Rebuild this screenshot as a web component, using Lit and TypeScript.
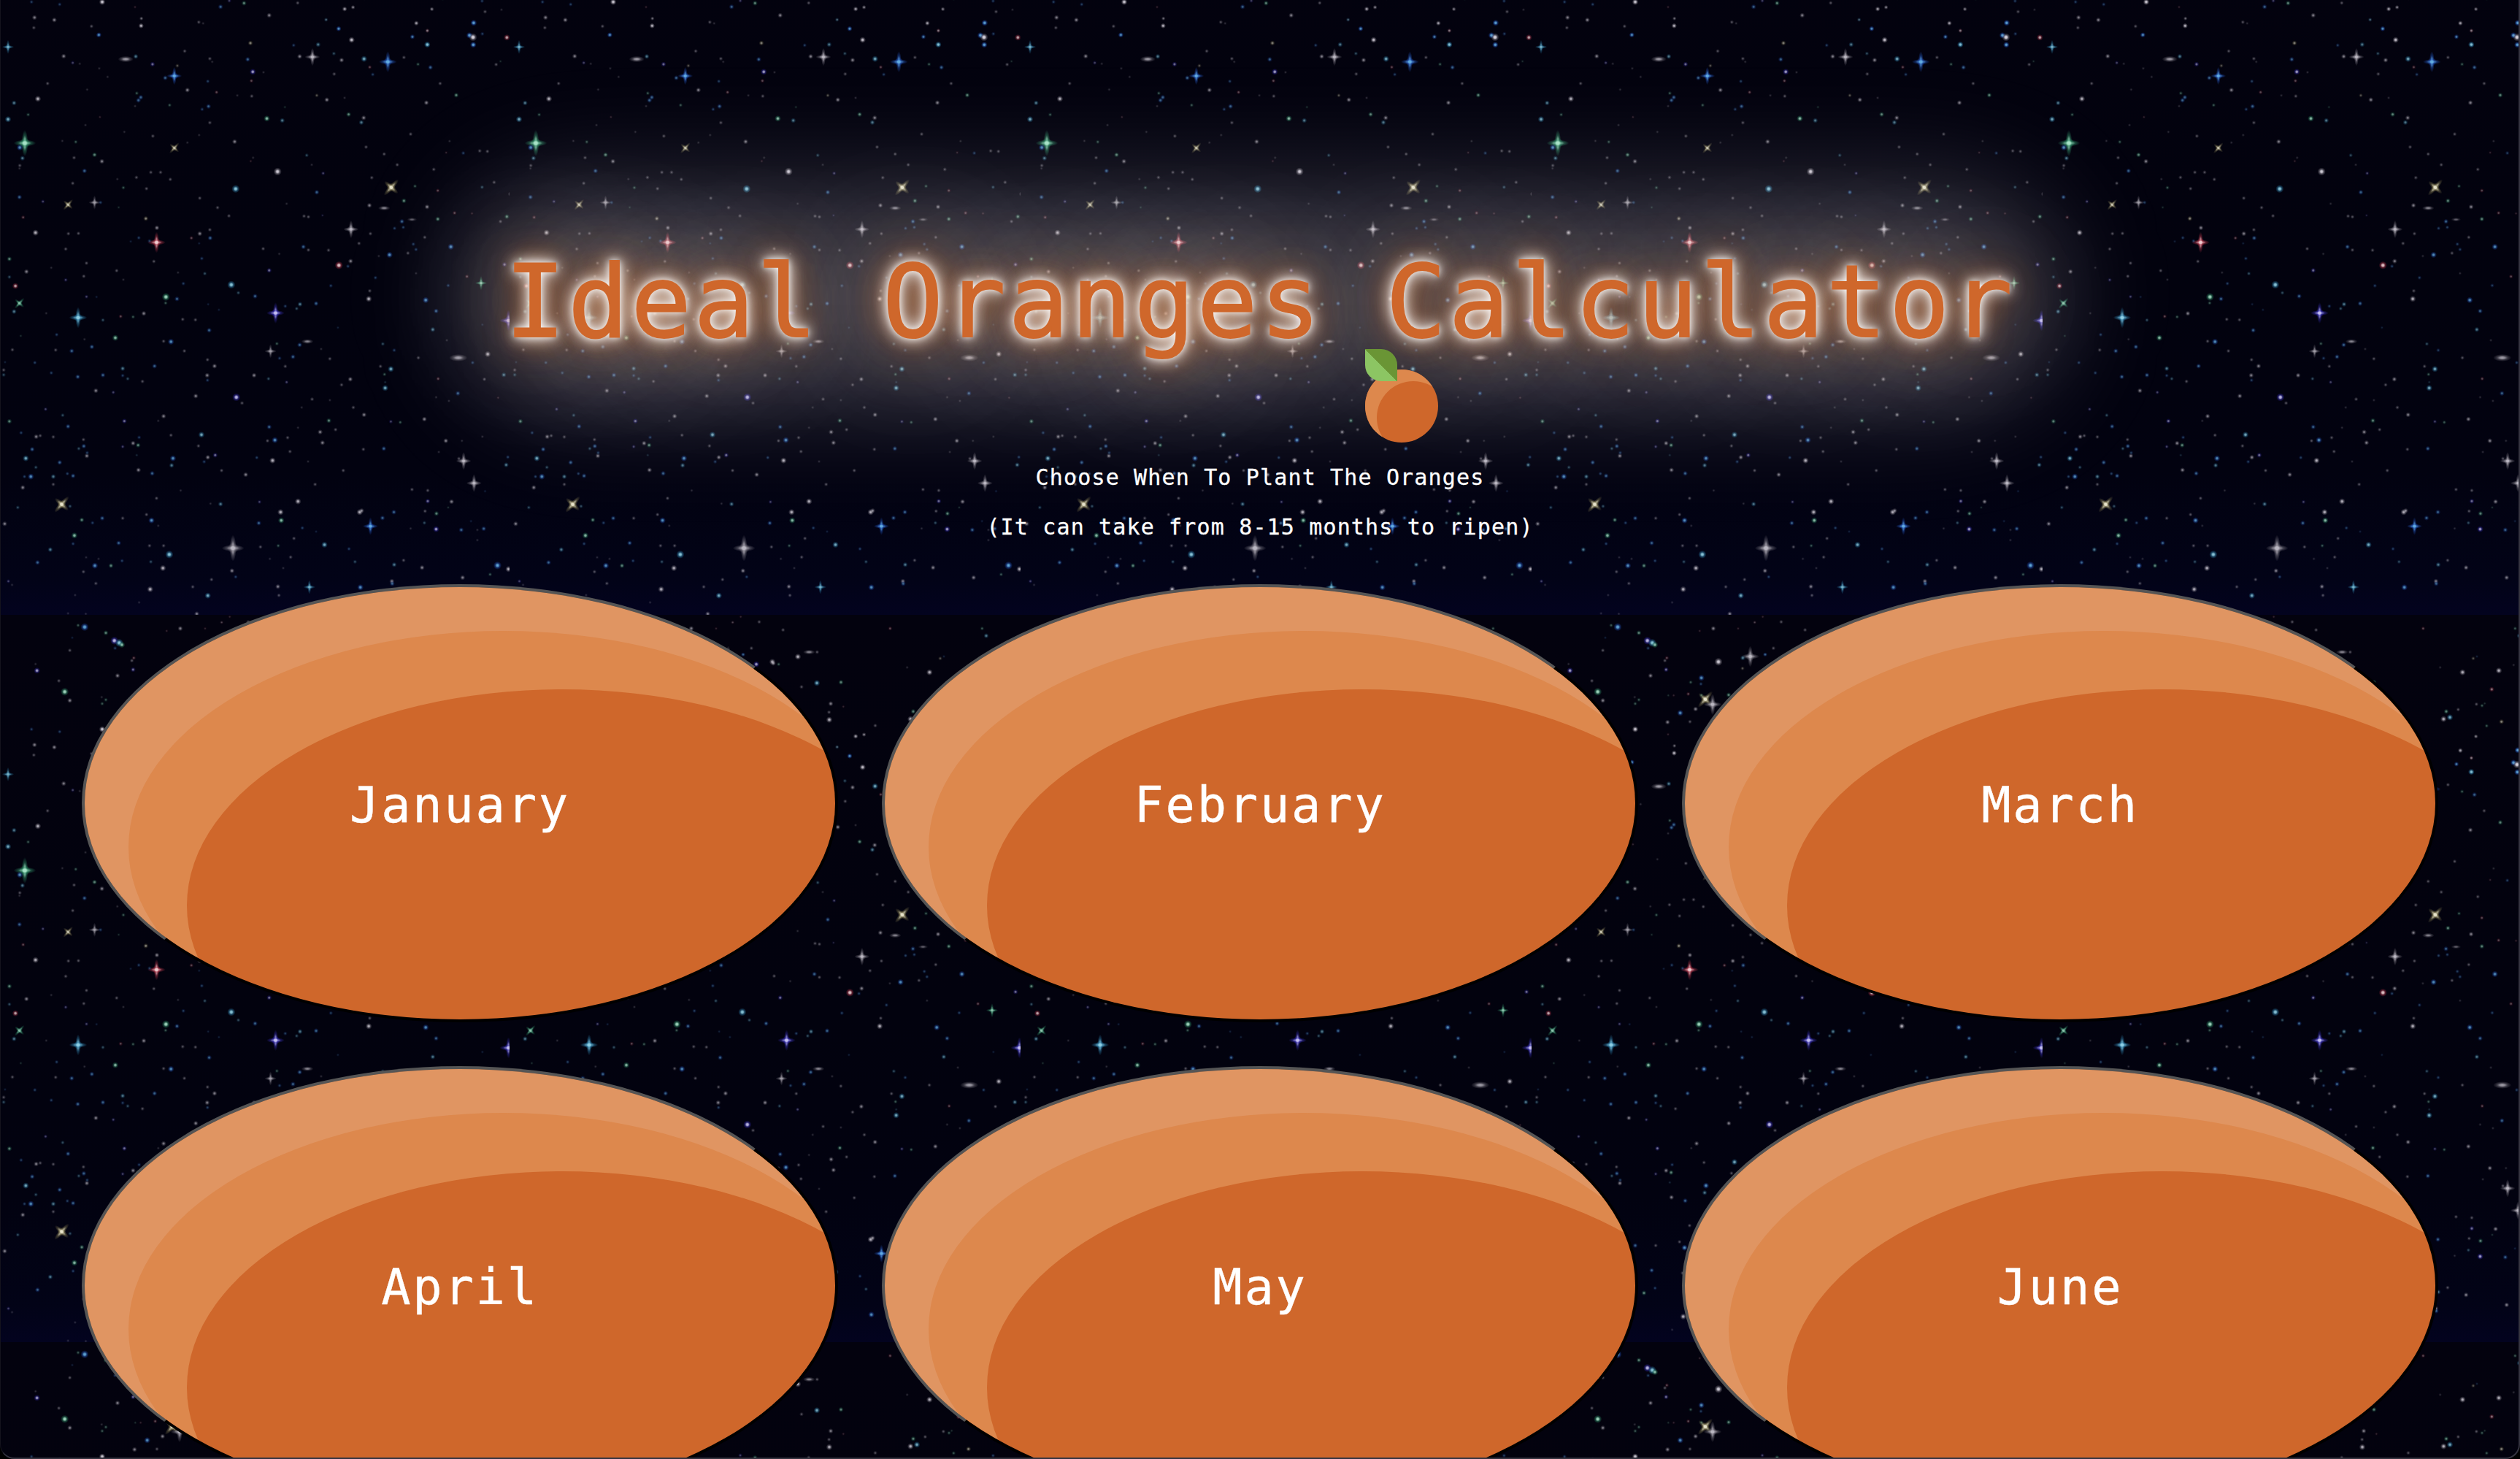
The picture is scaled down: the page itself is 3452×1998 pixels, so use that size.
import { LitElement, html, svg, css } from "lit";
import { customElement, property } from "lit/decorators.js";

/* Night sky tile: 700 x 996. Every plate lists stars as "x,y,<colour><shape?><size>". */
const TILE_W = 700;
const TILE_H = 996;

interface Plate {
  ox: number;
  oy: number;
  sx: number;
  sy: number;
  stars: string;
}

const PLATES: Plate[] = [
  {
    ox: 2, oy: 154, sx: 0.4592, sy: 0.3333,
    stars: `
    305,8,w2 94,8,b1 178,18,b1 103,72,w2 162,82,w2 101,114,w1 273,108,w1 421,106,w2 422,76,w0 294,144,b2 24,193,c+3
    190,231,w2 375,243,w-4 405,232,c2 455,264,v2 217,258,v1 238,262,w0 296,281,w0 321,316,w0 142,343,w1 520,312,b+4 493,320,b2
    529,270,y1 551,210,w1 626,241,w1 633,254,w0 739,244,b2 754,295,v3 750,332,r1 786,297,w0 747,177,y2 803,63,w2 684,3,v1
    658,28,b2 728,13,g2 888,12,w1 593,91,w1 606,96,w0 973,81,w0 1029,37,w1 1053,30,w1 1010,118,b2 949,183,c2 876,186,b1
    932,234,w+4 894,232,w2 996,220,c1 1019,247,w2 997,304,w1 1049,164,w1 1086,242,c3 1103,276,r1 1112,306,b1 1157,254,b+5
    1205,236,w1 1230,152,b1 1242,96,w1 1275,126,r1 1275,184,c2 1289,38,w1 1247,264,g1 1284,277,b2 1412,94,b2 1401,146,b2
    1411,153,w2 1412,184,b2 1439,139,b1 1438,4,b1 1447,48,w1 1496,40,w0 1512,154,r3 1480,265,w1 1493,252,g0 1313,343,w1
    113,406,w3 42,423,c2 24,490,c3 84,471,g1 260,368,w0 420,400,b2 413,412,b2 408,383,g1 403,436,w0 559,370,w2 646,379,r1
    620,334,b1 622,437,b2 603,449,b1 506,432,g1 626,504,w1 708,392,w0 751,395,w1 796,487,g3 842,495,c2 850,440,g0 945,392,y1
    975,410,w2 1040,470,g2 1085,484,w2 1078,503,c2 1272,422,w2 1361,391,g2 1028,402,w0 74,588,g+6 59,606,b3 67,650,c2 59,680,w1
    58,692,w0 186,579,w0 226,583,g1 221,648,w1 282,636,g2 304,663,w2 298,481,r0 255,514,w0 371,542,w0 456,559,w1 520,608,yx3
    559,586,w0 594,555,w0 700,582,w2 252,702,b2 217,753,w1 350,736,w0 368,771,g1 407,729,w1 450,708,w1 479,708,w1 508,737,w1
    437,775,w1 435,898,y2 128,828,v1 58,810,b2 203,841,yx3 282,832,w+3 300,832,b1 354,852,g0 596,814,w1 649,853,w1 683,887,w1
    703,776,c4 828,705,w4 755,648,w0 748,662,r0 915,638,c1 930,677,w0 964,712,v1 945,790,b2 1109,730,w1 1092,604,w1 1146,633,w1
    1185,677,w1 1225,551,w1 1294,696,w1 1382,629,b1 1331,627,r0 1431,620,w1 1454,622,w1 1341,580,w0 1167,770,yx5 1238,765,g1
    1205,825,g2 1102,844,w2 1146,855,w-3 1306,783,r1 1438,769,c1 1474,749,w1 1523,797,w2 1274,850,w2 1229,902,w-2 1199,910,b2
    1306,900,g2 1512,890,g2 1493,910,w1 1356,875,r1 1408,877,r0 1177,938,b1 1203,934,b1 1047,942,w+4 1105,960,w1 1071,1000,w1
    1267,975,w1 907,888,w1 920,891,w1 962,885,v0 855,837,w0 69,893,r1 106,956,w3 204,960,w1 234,959,w1 196,1023,w1 258,1081,w1
    250,1135,w1 196,1150,v1 79,1116,w2 28,1064,g2 28,1138,c1 46,1175,r3 58,1246,gx3 42,1280,c2 153,1100,w0 468,936,w2 467,996,r+5
    414,977,b1 390,992,b0 459,1074,w1 446,990,b1 571,978,r1 596,960,w2 627,978,b2 626,944,w1 594,1000,b0 602,1062,b1 531,1120,w0
    348,1112,w1 368,1149,w0 611,1124,c1 547,1165,b1 690,1170,c4 711,1203,c1 761,1217,b2 803,1111,v2 833,1043,w0 785,1022,w1
    905,1014,b2 920,1027,w1 980,1028,w1 1011,1090,r4 1046,1073,w2 1038,1094,b1 1130,1052,w0 1162,1047,b3 1217,1040,w1 1233,1003,b1
    1241,1025,b1 1345,1014,b3 1120,1141,b1 1103,1195,w1 1100,1228,w3 1337,1173,b1 1393,1136,r1 1435,1163,g+3 1505,1087,v2
    1241,1123,w0 495,1220,g4 494,1245,g1 528,1228,b2 258,1219,v1 288,1220,b0 233,1305,c+5 307,1315,c1 360,1300,r1 397,1302,g1
    429,1288,w2 138,1287,w0 545,1312,w1 583,1314,w1 624,1357,b2 822,1286,v+5 895,1250,c2 885,1268,c1 943,1247,b2 851,1258,b1
    621,1250,b0 653,1273,b0 987,1174,b1 1270,1233,b3 1301,1278,b2 1008,1346,b0 1291,1354,c2 1333,1398,w0 1439,1334,b0
    1517,1317,v+5 344,1388,g3 169,1375,b1 62,1380,g0 252,1394,w0 274,1425,b2 214,1442,b2 166,1438,w1 37,1437,w1 510,1404,b3
    488,1402,w1 550,1442,w1 807,1443,w+3 826,1412,g1 894,1417,b2 917,1403,w-3 874,1466,b2 834,1472,b1 958,1434,w0 984,1474,w1
    1142,1413,c1 1176,1439,b1 1248,1470,w1 1367,1470,w-5 1455,1455,w3 1410,1490,b1 104,1490,b1 15,1488,b0 619,1478,w1`,
  },
  {
    ox: 2, oy: 654, sx: 0.4592, sy: 0.3333,
    stars: `
    11,20,w1 11,40,c1 153,32,b1 232,48,b2 307,41,b2 366,14,c2 366,43,b1 381,56,c1 461,4,b2 425,67,w1 618,42,w2 640,4,w2
    619,62,b1 758,42,w2 801,56,c1 851,5,w1 855,70,v1 1166,16,c3 1147,38,g1 1149,94,c3 1149,70,c0 1135,5,w1 1045,58,w2 1019,81,w1
    1307,56,r1 1445,58,w1 1503,40,c2 1536,38,c1 1537,10,w1 1366,116,b2 1301,132,w0 1339,147,w0 1486,134,r0 286,105,w2 338,112,v1
    136,181,v1 28,231,g2 187,206,c1 203,252,b2 371,230,v2 488,210,w2 472,229,w0 584,127,w2 705,132,v4 722,156,w1 931,140,w1
    984,144,w0 900,174,w0 1054,174,w1 1086,204,w2 981,228,g2 1001,265,w1 955,275,w2 889,257,w0 1194,235,g1 1166,232,v1
    1266,222,w2 1553,231,g2 63,278,b1 108,294,w2 120,290,w1 159,295,w1 249,306,w1 250,333,b2 235,343,c1 96,346,b2 77,383,c3
    107,420,c1 178,400,b2 259,373,w2 260,360,b1 366,335,v1 397,321,w2 415,297,b1 412,329,g2 408,370,c0 510,288,w1 601,286,c3
    592,332,w1 620,379,w2 642,370,v2 609,397,b1 516,383,b3 512,412,c2 803,254,b2 820,308,b3 798,311,w1 858,298,w1 865,355,w1
    766,380,b1 813,392,w3 962,319,w2 919,396,w0 1084,346,w1 1145,343,b2 1330,311,w2 1378,311,w0 1439,294,w0 1309,357,w0
    1383,394,w+4 1369,384,w1 1515,378,b1 1510,410,c2 1414,485,w+4 413,431,w2 454,445,b2 661,433,w1 733,450,w2 1024,433,w1
    940,490,w1 92,458,b3 73,458,b1 159,458,c2 159,490,w1 201,446,b1 218,455,b2 68,503,w2 53,585,c1 184,572,yx5 209,580,c1
    244,636,g2 276,648,b1 305,629,b2 366,629,w1 437,614,w1 467,547,w1 539,515,w0 452,638,b3 472,660,w0 658,571,c2 628,569,w0
    774,562,v1 889,560,w3 837,604,w3 839,638,g3 772,649,b2 902,669,b1 943,684,b0 1073,604,w3 1079,598,w2 1105,662,b+4
    1141,628,b2 1175,604,b2 1229,511,w1 1276,515,w1 1276,559,v2 1347,561,w2 1268,600,w1 1302,610,g2 1337,585,g0 1266,648,c1
    1301,674,v3 1376,677,b2 1443,672,b2 1424,677,w0 1225,671,w0 1447,518,b0 1405,641,b0 1424,719,w0 1538,652,w3 14,652,w2
    222,700,g3 218,734,b1 150,758,c2 112,811,b2 354,731,b2 446,742,w1 488,742,w1 505,778,c4 331,824,g2 283,824,b3 364,804,b1
    249,849,w1 294,796,w0 257,790,w0 450,808,c1 486,834,w3 695,752,w+6 692,845,w2 703,870,b1 777,747,w1 830,742,g1 805,796,w0
    867,789,w1 845,834,w0 877,712,w1 968,738,c3 1041,755,b1 1059,808,c1 1176,820,c2 1204,802,w1 1259,832,w2 1484,823,b4
    1462,860,g1 1517,838,w3 1380,873,w2 1548,888,v1 1560,902,w1 1169,888,w2 1170,898,b2 1075,913,b3 923,912,c+3 829,910,w2
    832,946,w1 25,888,v1 36,903,w0 286,897,w1 448,921,w3 575,911,w1 631,881,w1 620,947,c3 224,945,w0 415,975,w0 587,1022,w2
    203,1020,w0 256,1022,w0`,
  },
  {
    ox: 22, oy: -22, sx: 0.3333, sy: 0.3333,
    stars: `
    288,116,b4 261,109,g1 375,140,g2 410,172,v4 430,181,c4 441,189,g3 413,203,b1 227,212,w1 237,160,b0 92,295,v3 86,268,w0
    182,337,w1 206,382,g4 227,418,w2 490,243,r1 482,254,w1 487,291,v2 423,316,w2 358,404,w0 375,415,g1 360,431,g1 496,397,g0
    518,397,r0 545,469,b3 493,507,w2 588,343,g1 578,391,r1 632,325,b3 630,350,b1 648,413,yx5 632,396,g1 678,434,w+5 608,453,w2
    585,505,w1 360,536,w3 521,604,w1 520,634,w2 347,671,b2 681,122,w2 702,259,w4 833,237,w+5 802,243,c2 801,286,y1 893,229,b1
    744,395,g2 850,97,w0 625,132,r0 783,122,r0 495,557,r0`,
  },
  {
    ox: 302, oy: -22, sx: 0.3333, sy: 0.3333,
    stars: `
    120,95,w1 218,128,w1 44,74,r0 12,97,r0 88,203,w1 55,229,b1 108,269,v3 174,259,w3 178,265,w2 200,269,g1 279,238,w3
    325,219,w-3 358,219,w1 357,346,c3 456,343,g2 294,362,w1 414,431,w2 407,466,w1 408,497,w3 466,443,r0 516,565,w2 551,558,w1
    597,521,w1 440,609,c1 492,646,b2 545,692,w3 658,122,r1 728,282,w0 820,302,w3 864,245,y1 879,237,b0 753,463,g2 742,494,w3`,
  },
  {
    ox: 442, oy: -22, sx: 0.3333, sy: 0.3333,
    stars: `
    549,295,w3 520,372,r2 457,433,w1 480,439,g1 491,430,g0 382,455,w1 348,487,c3 560,505,y2 499,522,g1 454,565,w1 391,623,w2
    436,654,w1 375,679,b2 436,711,c3 627,622,b3 609,673,b3 624,681,w4 625,712,b3 616,122,g1 633,152,c2 610,272,w0`,
  },
];

const HUES: Record<string, [string, string]> = {
  w: ["#dcd8e2", "#85818c"],
  b: ["#62ace2", "#1f4cac"],
  c: ["#8ed0e6", "#2b7aa4"],
  g: ["#a6e4c8", "#2a8460"],
  r: ["#f0ccd0", "#a83044"],
  y: ["#e8e4cc", "#78704a"],
  v: ["#c4c0f4", "#342cae"],
};

const RADII = [2.4, 3, 3.6, 4.4, 5.6, 6.6, 8.2];
const ALPHAS = [0.2, 0.38, 0.6, 0.85, 1, 1, 1];

function drawStar(token: string, p: Plate) {
  const [xs, ys, code] = token.split(",");
  const x = Number(xs) * p.sx + p.ox;
  const y = Number(ys) * p.sy + p.oy;
  const hue = code[0];
  const shape = code.length > 2 ? code[1] : ".";
  const size = Number(code[code.length - 1]);
  const r = RADII[size];
  const fill = `url(#hue-${hue})`;
  const a = ALPHAS[size];
  if (shape === "-") {
    return svg`<ellipse cx=${x} cy=${y} rx=${r * 1.9} ry=${r * 0.75} fill=${fill} opacity=${a * 0.75}></ellipse>`;
  }
  if (shape === "+" || shape === "x") {
    const long = r * 2.2;
    const turn = shape === "x" ? `rotate(42 ${x} ${y})` : "";
    const dim = hue === "w" ? 0.85 : 1;
    return svg`<g transform=${turn} opacity=${a * dim}>
      <ellipse cx=${x} cy=${y} rx=${r * 0.55} ry=${long} fill=${fill}></ellipse>
      <ellipse cx=${x} cy=${y} rx=${long * 0.85} ry=${r * 0.55} fill=${fill}></ellipse>
      <circle cx=${x} cy=${y} r=${r * 0.9} fill=${fill}></circle>
    </g>`;
  }
  return svg`<circle cx=${x} cy=${y} r=${r} fill=${fill} opacity=${a}></circle>`;
}

@customElement("night-sky")
export class NightSky extends LitElement {
  static styles = css`
    :host {
      display: block;
    }
    .sky {
      display: block;
      width: 100%;
      height: 100%;
    }
  `;

  render() {
    return html`<svg class="sky" aria-hidden="true">
      <defs>
        ${Object.entries(HUES).map(
          ([key, [core, halo]]) => svg`<radialGradient id=${`hue-${key}`}>
            <stop offset="0" stop-color=${core}></stop>
            <stop offset="0.3" stop-color=${core} stop-opacity="0.8"></stop>
            <stop offset="0.6" stop-color=${halo} stop-opacity="0.5"></stop>
            <stop offset="1" stop-color=${halo} stop-opacity="0"></stop>
          </radialGradient>`
        )}
        <linearGradient id="depth" x1="0" y1="0" x2="0" y2="1">
          <stop offset="0" stop-color="#03020e"></stop>
          <stop offset="0.55" stop-color="#02020e"></stop>
          <stop offset="0.8" stop-color="#020210"></stop>
          <stop offset="0.95" stop-color="#020317"></stop>
          <stop offset="1" stop-color="#03031f"></stop>
        </linearGradient>
        <pattern id="stars" patternUnits="userSpaceOnUse" x="-2" y="-154" width=${TILE_W} height=${TILE_H}>
          <rect width=${TILE_W} height=${TILE_H} fill="url(#depth)"></rect>
          ${PLATES.map((p) => p.stars.trim().split(/\s+/).map((t) => drawStar(t, p)))}
        </pattern>
      </defs>
      <rect width="100%" height="100%" fill="url(#stars)"></rect>
    </svg>`;
  }
}

@customElement("month-orange")
export class MonthOrange extends LitElement {
  @property() name = "";

  static styles = css`
    :host {
      display: block;
    }
    .orange {
      display: block;
      box-sizing: border-box;
      width: 100%;
      height: 600px;
      padding: 6px 0 0;
      border: 4px solid;
      border-color: #555 #000 #000 #555;
      border-radius: 50%;
      background: #cf672b;
      box-shadow: inset 60px 60px 0 #e09562, inset 140px 140px 0 #dd884d;
      color: #fff;
      font: 67px "DejaVu Sans Mono", monospace;
      letter-spacing: 2.8px;
      text-align: center;
      -webkit-text-stroke: 0.4px #fff;
    }
  `;

  render() {
    return html`<button class="orange">${this.name}</button>`;
  }
}

@customElement("app-root")
export class AppRoot extends LitElement {
  static styles = css`
    :host {
      display: block;
      position: relative;
      height: 1998px;
      overflow: hidden;
      background: #03020e;
      font-family: "DejaVu Sans Mono", monospace;
    }
    .backdrop {
      position: absolute;
      inset: 0;
    }
    .frame {
      position: absolute;
      inset: 0;
      border: 2px solid #34333f;
      border-top: 0;
      border-left: 1px solid #14131d;
      border-radius: 0 0 20px 20px;
      box-shadow: 0 0 0 20px #000;
      pointer-events: none;
    }
    .page {
      position: relative;
      display: flex;
      flex-direction: column;
    }
    .header {
      display: flex;
      flex-direction: column;
      align-items: center;
      height: 800px;
      box-sizing: border-box;
      padding-top: 331px;
    }
    .title {
      position: relative;
      z-index: 0;
      margin: 0;
      color: #cf672b;
      font-size: 137.5px;
      font-weight: 400;
      line-height: 165px;
      letter-spacing: 3.4px;
      white-space: pre;
      -webkit-text-stroke: 2px #cf672b;
      text-shadow: 0 0 10px #fff, 0 0 20px #fff, 0 0 26px rgba(255, 255, 255, 0.6), 0 0 44px #d2691e,
        0 0 90px rgba(210, 105, 30, 0.75), 0 0 164px #fff, 0 0 204px rgba(255, 255, 255, 0.8);
    }
    .title::before {
      content: "";
      position: absolute;
      z-index: -1;
      inset: -90px -70px -70px;
      border-radius: 160px;
      background: rgba(235, 228, 235, 0.19);
      filter: blur(72px);
    }
    .fruit {
      position: relative;
      width: 100px;
      height: 100px;
      margin: 10px 0 0 388px;
      border-radius: 50%;
      background: #cf672b;
      box-shadow: inset 16px 16px 0 #dd884d;
    }
    .leaf {
      position: absolute;
      left: 0;
      top: -28px;
      width: 44px;
      height: 44px;
      border-radius: 0 50% 0 50%;
      background: linear-gradient(45deg, #8cc563 50%, #6a9535 50%);
    }
    .hints {
      position: relative;
      margin-top: 14px;
    }
    .hint {
      margin: 0;
      color: #fff;
      font-size: 30px;
      line-height: 68px;
      letter-spacing: 1.15px;
      text-align: center;
      -webkit-text-stroke: 0.3px #fff;
    }
    .months {
      display: grid;
      grid-template-columns: repeat(3, 1fr);
      gap: 60px;
      padding: 0 112px;
    }
  `;

  private months = ["January", "February", "March", "April", "May", "June"];

  render() {
    return html`
      <night-sky class="backdrop"></night-sky>
      <main class="page">
        <header class="header">
          <h1 class="title">Ideal Oranges Calculator</h1>
          <div class="fruit"><div class="leaf"></div></div>
          <div class="hints">
            <p class="hint">Choose When To Plant The Oranges</p>
            <p class="hint">(It can take from 8-15 months to ripen)</p>
          </div>
        </header>
        <section class="months">
          ${this.months.map((m) => html`<month-orange .name=${m}></month-orange>`)}
        </section>
      </main>
      <div class="frame"></div>
    `;
  }
}
